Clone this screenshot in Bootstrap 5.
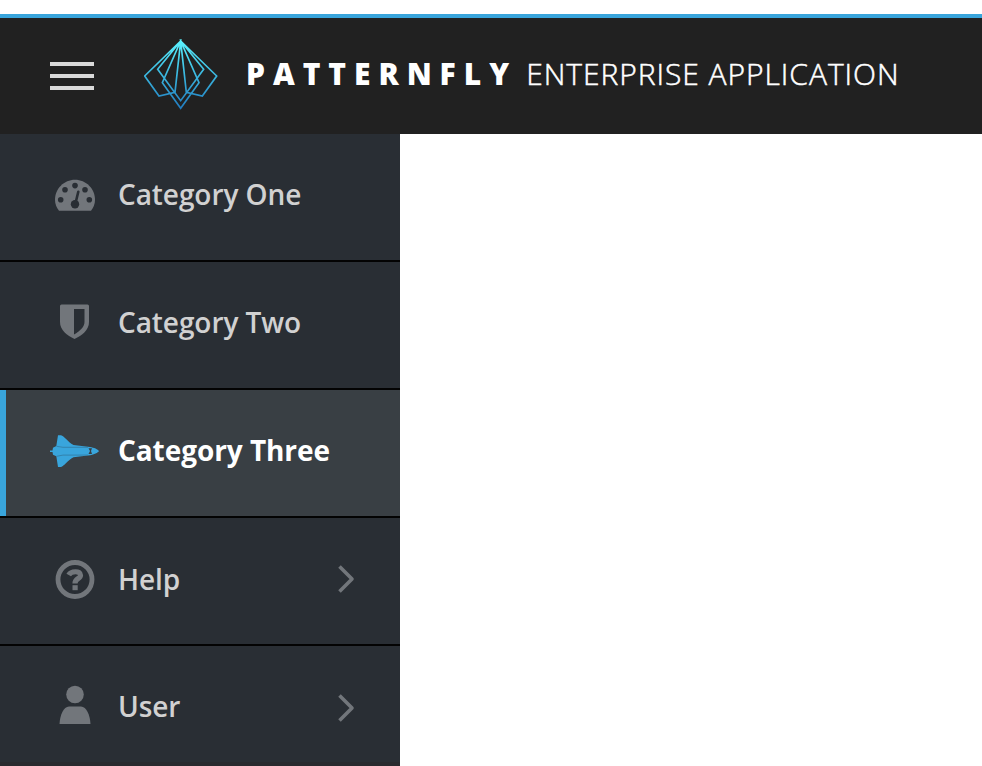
<!DOCTYPE html>
<html lang="en">
<head>
<meta charset="utf-8">
<title>PatternFly Enterprise Application</title>
<link href="https://cdn.jsdelivr.net/npm/bootstrap@5.3.0/dist/css/bootstrap.min.css" rel="stylesheet">
<style>
body{font-family:"Open Sans",sans-serif;background:#fff}
.pf-page{height:766px;padding-top:14px}
.pf-header{height:120px;border-top:4px solid #39a5dc;background:#212121;padding-left:50px}
.pf-toggle{width:44px;height:28px;margin-right:50px}
.pf-toggle span{height:4px;background:#d9d9d9}
.pf-logo{width:74px;height:72px;margin:0 28px 2px 0}
.pf-brand{font-size:30px;line-height:40px;color:#fff;padding-bottom:4px}
.pf-brand strong{font-weight:800;letter-spacing:7.95px}
.pf-brand span{font-weight:300;letter-spacing:.95px;margin-left:1.3px;-webkit-text-stroke:.5px #fff}
.pf-side{width:400px;background:#292e34}
.pf-item{height:128px;border-bottom:2px solid #030303;padding:0 44px 6px 50px;color:#d1d1d1;font-size:28px;line-height:38px;font-weight:600;letter-spacing:-.07px}
.pf-item>span{padding-bottom:1px}
.pf-item.active{background:#393f44;color:#fff;font-weight:700;box-shadow:inset 6px 0 #39a5dc}
.pf-item svg{flex:none}
.pf-icon{width:50px;height:50px;margin-right:18px;color:#72767b}
.pf-item.active .pf-icon{color:#39a5dc}
.pf-item.pf-help{padding-bottom:4px}
.pf-help>span{padding:0}
.pf-last{height:120px;border-bottom:4px solid #292a2e;padding-bottom:0}
.pf-last>span{padding:3px 0 0}
.pf-chev{width:18px;height:30px}
.pf-last .pf-chev{margin-top:8px}
</style>
<script src="https://cdn.jsdelivr.net/npm/bootstrap@5.3.0/dist/js/bootstrap.bundle.min.js"></script>
</head>
<body class="overflow-hidden">
<div class="pf-page d-flex flex-column">
<header class="pf-header d-flex align-items-center flex-shrink-0">
<button class="pf-toggle btn p-0 border-0 rounded-0 d-flex flex-column justify-content-between" aria-label="Toggle navigation"><span class="w-100"></span><span class="w-100"></span><span class="w-100"></span></button>
<svg class="pf-logo" viewBox="42 27 222 216" fill="none" stroke="url(#lg)" stroke-width="5">
<defs><linearGradient id="lg" gradientUnits="userSpaceOnUse" x1="0" y1="30" x2="0" y2="236"><stop offset="0" stop-color="#5cf3ff"/><stop offset=".4" stop-color="#40c4e6"/><stop offset="1" stop-color="#217bbf"/></linearGradient></defs>
<path d="M152 33 44 138 87 198 135 187ZM152 33 260 138 217 198 169 187ZM152 33 83 118 152 212 221 118ZM152 33 97 158 152 235 207 158Z"/>
</svg>
<div class="pf-brand text-nowrap"><strong>PATTERNFLY</strong> <span>ENTERPRISE APPLICATION</span></div>
</header>
<nav class="pf-side flex-grow-1">
<div class="pf-item d-flex align-items-center"><svg class="pf-icon" viewBox="0 -2.3 50 50"><path fill="currentColor" d="M9 39.5C6.500 36.500 5 32.500 5 28.500 5 17.500 14 8.500 25 8.500S45 17.500 45 28.500C45 32.500 43.500 36.500 41 39.500Z"/><g fill="#292e34"><circle cx="10.700" cy="28.500" r="2.800"/><circle cx="15" cy="18.500" r="2.800"/><circle cx="25" cy="14.300" r="2.800"/><circle cx="35" cy="18.500" r="2.800"/><circle cx="39.300" cy="28.500" r="2.800"/><circle cx="25" cy="33" r="4.200"/></g><path stroke="#292e34" stroke-width="2.600" stroke-linecap="round" d="M25.500 32 28.300 20.500"/></svg><span>Category One</span></div>
<div class="pf-item d-flex align-items-center"><svg class="pf-icon" viewBox="0 0 50 50"><path fill="currentColor" d="M11.500 7.500H37.500Q39 7.500 39 9V25C39 33 32 38.500 24.500 42 17 38.500 10 33 10 25V9Q10 7.500 11.500 7.500Z"/><path fill="#292e34" d="M24 12H34.500V25C34.500 30 30 34 24 37.500Z"/></svg><span>Category Two</span></div>
<div class="pf-item active d-flex align-items-center"><svg class="pf-icon" viewBox="0 -.8 50 50"><path fill="currentColor" d="M8 9.500H11C14 10 17.500 16 23.500 19.200L40 21.200C44 21.800 48 23.500 49 25.300 48 27.200 44 28.800 40 29.500L23.500 31.500C17.500 34.500 14 40.500 11 41.300H8L6.300 30.500 3 29 2.500 26.300H0V24.700H2.500L3 22 6.300 20.300Z"/><path fill="none" stroke="#31749a" stroke-width=".7" d="M6.500 20.500 13 21.500H38M6.500 30.500 13 29.300H38"/><path fill="#393f44" d="M38.500 22.500H42L41 25.300 42 28.300H38.500L40 25.300Z"/></svg><span>Category Three</span></div>
<div class="pf-item pf-help d-flex align-items-center"><svg class="pf-icon" viewBox="0 -.5 50 50"><circle cx="25" cy="25" r="17" fill="none" stroke="currentColor" stroke-width="4.800"/><path fill="none" stroke="currentColor" stroke-width="5.200" d="M18.700 20.500C21 16.500 30.500 15.700 30.500 20.800 30.500 24.500 25 23.600 25 29"/><path fill="currentColor" d="M22.500 30.700H27.700V35.700H22.500Z"/></svg><span>Help</span><svg class="pf-chev ms-auto" viewBox="0 0 18 30" fill="none" stroke="#72767b" stroke-width="3.600" stroke-linejoin="round"><path d="M1.500 2.500 14 15 1.500 27.500"/></svg></div>
<div class="pf-item pf-last d-flex align-items-center"><svg class="pf-icon" viewBox="0 .5 50 50"><g fill="currentColor"><circle cx="25" cy="16" r="8.800"/><path d="M9.500 45.500C10 36.500 13.500 28 19 28H31C36.500 28 40 36.500 40.500 45.500Z"/></g></svg><span>User</span><svg class="pf-chev ms-auto" viewBox="0 0 18 30" fill="none" stroke="#72767b" stroke-width="3.600" stroke-linejoin="round"><path d="M1.500 2.500 14 15 1.500 27.500"/></svg></div>
</nav>
</div>
</body>
</html>
